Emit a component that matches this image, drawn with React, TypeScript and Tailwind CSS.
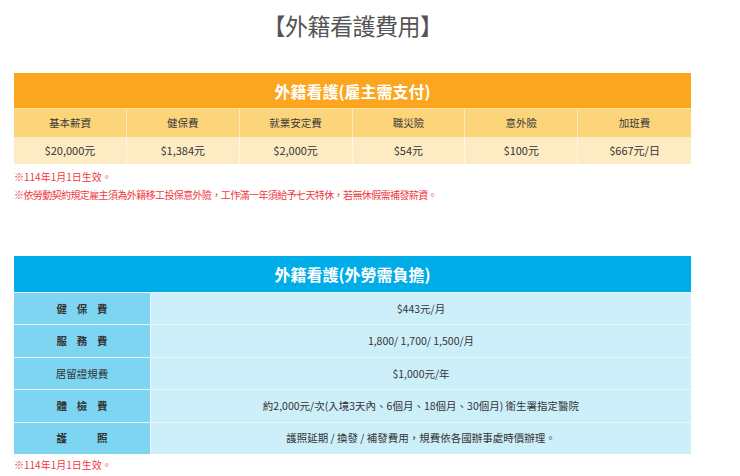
const font = { fontFamily: '"Noto Sans CJK TC", "Noto Sans", sans-serif' };

const employerHeads = ['基本薪資', '健保費', '就業安定費', '職災險', '意外險', '加班費'];
const employerValues = ['$20,000元', '$1,384元', '$2,000元', '$54元', '$100元', '$667元/日'];

const workerRows = [
  { label: ['健', '保', '費'], value: '$443元/月' },
  { label: ['服', '務', '費'], value: '1,800/ 1,700/ 1,500/月' },
  { label: ['居留證規費'], value: '$1,000元/年' },
  { label: ['體', '檢', '費'], value: '約2,000元/次(入境3天內、6個月、18個月、30個月) 衛生署指定醫院' },
  { label: ['護', '照'], value: '護照延期 / 換發 / 補發費用，規費依各國辦事處時價辦理。' },
];

const App = () => {
  return (
    <div className="w-[740px] h-[476px] bg-white overflow-hidden" style={font}>
      <div className="w-[677px] ml-[14px] flex flex-col">
        <h1 className="text-center text-[23px] leading-none text-[#555] font-normal mt-[14px] tracking-[-0.5px]">
          【外籍看護費用】
        </h1>

        <div className="mt-[36px] flex flex-col">
          <div className="h-[35px] bg-[#fca61f] flex items-center justify-center text-white font-bold text-[16px]">
            外籍看護(雇主需支付)
          </div>
          <div className="grid grid-cols-6 h-[29px] bg-[#fcd47a] border-t border-[#fde3a8] text-[#3a3a3a] text-[10.5px]">
            {employerHeads.map((h, i) => (
              <div key={h} className={`flex items-center justify-center ${i < 5 ? 'border-r border-[#fde9bd]' : ''}`}>
                {h}
              </div>
            ))}
          </div>
          <div className="grid grid-cols-6 h-[27px] bg-[#fdebc4] text-[#333] text-[11px]">
            {employerValues.map((v, i) => (
              <div key={v} className={`flex items-center justify-center ${i < 5 ? 'border-r border-[#fff6e4]' : ''}`}>
                {v}
              </div>
            ))}
          </div>
        </div>

        <div className="mt-[7px] flex flex-col gap-[6px] text-[#f0393f] text-[10px] leading-[12px]">
          <p>※114年1月1日生效。</p>
          <p className="tracking-[-0.6px]">※依勞動契約規定雇主須為外籍移工投保意外險，工作滿一年須給予七天特休，若無休假需補發薪資。</p>
        </div>

        <div className="mt-[55px] flex flex-col">
          <div className="h-[36px] bg-[#00ade8] flex items-center justify-center text-white font-bold text-[16px]">
            外籍看護(外勞需負擔)
          </div>
          {workerRows.map((r) => (
            <div key={r.value} className="flex h-[32.4px] border-t border-[#e6f7fd]">
              <div className="w-[136px] bg-[#7dd5f2] flex items-center justify-center text-[#333] text-[10.5px]">
                {r.label.length > 1 ? (
                  <span className="w-[51px] flex justify-between font-bold">
                    {r.label.map((c) => (
                      <span key={c}>{c}</span>
                    ))}
                  </span>
                ) : (
                  <span>{r.label[0]}</span>
                )}
              </div>
              <div className="flex-1 bg-[#cdeffa] border-l border-[#e6f7fd] flex items-center justify-center text-[#333] text-[10.5px]">
                {r.value}
              </div>
            </div>
          ))}
        </div>

        <p className="mt-[5px] text-[#f0393f] text-[10px] leading-[12px]">※114年1月1日生效。</p>
      </div>
    </div>
  );
};

export default App;
